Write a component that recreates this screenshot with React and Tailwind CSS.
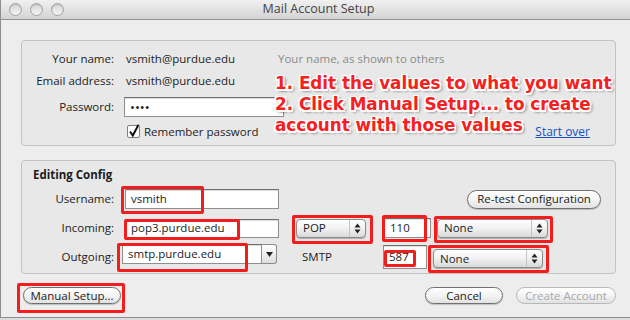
import React from 'react';

const ui = "font-['Open_Sans',sans-serif] text-[11.5px] text-[#1c1c1c]";

// Red highlight box drawn over a control
const Mark = ({ className }) => (
    <div className={`pointer-events-none absolute rounded-[2px] border-[3px] border-[#f31d1d] ${className}`} />
);

const Field = ({ value, className, children }) => (
    <div className={`relative flex items-center border border-[#8f8f8f] border-t-[#6f6f6f] bg-white pl-[5px] shadow-[inset_0_1px_1px_rgba(0,0,0,0.15)] ${className}`}>
        <span className="leading-none">{value}</span>
        {children}
    </div>
);

const Arrows = () => (
    <svg width="7" height="11" viewBox="0 0 7 11">
        <path d="M3.5 0.5 L6.5 4.5 L0.5 4.5 Z M3.5 10.5 L6.5 6.5 L0.5 6.5 Z" fill="#222" />
    </svg>
);

const Popup = ({ label, className, children }) => (
    <div className={`relative flex items-center rounded-[4px] border border-[#8a8a8a] bg-gradient-to-b from-white via-[#f1f1f1] to-[#d9d9d9] shadow-[0_1px_1px_rgba(0,0,0,0.25)] ${className}`}>
        <span className="flex-1 pl-[6px] leading-none">{label}</span>
        <div className="flex h-full w-[16px] items-center justify-center border-l border-[#c4c4c4]">
            <Arrows />
        </div>
        {children}
    </div>
);

const Button = ({ label, disabled, className, children }) => (
    <div className={`relative flex items-center justify-center rounded-full border bg-gradient-to-b from-white via-[#f4f4f4] to-[#e2e2e2] ${disabled ? 'border-[#b8b8b8] text-[#a9a9a9]' : 'border-[#707070] shadow-[0_1px_1px_rgba(0,0,0,0.2)]'} ${className}`}>
        <span className="leading-none">{label}</span>
        {children}
    </div>
);

const Light = () => (
    <div className="h-[13px] w-[13px] rounded-full border border-[#a4a4a4] bg-gradient-to-b from-[#d6d6d6] to-[#f4f4f4] shadow-[inset_0_1px_1px_rgba(0,0,0,0.15)]" />
);

export default function App() {
    return (
        <div className={`h-[320px] w-[630px] overflow-hidden bg-[#dcdcdc] ${ui}`}>
            <div className="flex h-[318px] flex-col border-b border-l border-[#8d8d8d] bg-[#ededed]">
                {/* title bar */}
                <div className="grid h-[20px] grid-cols-[1fr_auto_1fr] items-center border-b border-[#949494] bg-gradient-to-b from-[#f0f0f0] to-[#d4d4d4]">
                    <div className="flex gap-[8px] pl-[8px]">
                        <Light />
                        <Light />
                        <Light />
                    </div>
                    <div className="pl-[6px] text-[12.5px] text-[#444]">Mail Account Setup</div>
                    <div />
                </div>

                <div className="flex flex-col pl-[20px] pr-[14px]">
                    {/* account box */}
                    <div className="relative mt-[20px] flex h-[106px] flex-col rounded-[4px] border border-[#c3c3c3] bg-[#e8e8e8] pt-[9px]">
                        <div className="flex h-[18px] items-center">
                            <div className="w-[92px] text-right">Your name:</div>
                            <div className="ml-[12px] w-[152px]">vsmith@purdue.edu</div>
                            <div className="text-[#8a8a8a]">Your name, as shown to others</div>
                        </div>
                        <div className="mt-[4px] flex h-[18px] items-center">
                            <div className="w-[92px] text-right">Email address:</div>
                            <div className="ml-[12px]">vsmith@purdue.edu</div>
                        </div>
                        <div className="mt-[7px] flex h-[20px] items-center">
                            <div className="w-[92px] text-right">Password:</div>
                            <Field value="••••" className="ml-[10px] h-[20px] w-[160px] text-[13px]" />
                        </div>
                        <div className="mt-[6px] flex h-[17px] items-center">
                            <div className="ml-[105px] flex items-center gap-[3px]">
                                <svg width="14" height="15" viewBox="0 0 14 15">
                                    <rect x="0.5" y="1.5" width="12" height="12" rx="1.5" fill="#fff" stroke="#7f7f7f" />
                                    <path d="M3 7.5 L5.8 11.5 L11.5 0.8" fill="none" stroke="#111" strokeWidth="2" />
                                </svg>
                                <span>Remember password</span>
                            </div>
                            <div className="ml-auto mr-[25px] text-[12px] text-[#1450c8] underline">Start over</div>
                        </div>

                        {/* annotation */}
                        <div className="pointer-events-none absolute left-[253px] top-[32px] whitespace-nowrap font-['DejaVu_Sans',sans-serif] text-[16.8px] font-bold leading-[21px] text-[#f52020] [text-shadow:1.5px_1.5px_0_#fff,-1.5px_-1.5px_0_#fff,1.5px_-1.5px_0_#fff,-1.5px_1.5px_0_#fff,0_1.5px_0_#fff,0_-1.5px_0_#fff,1.5px_0_0_#fff,-1.5px_0_0_#fff,2px_2px_3px_rgba(0,0,0,0.7)]">
                            <div>1. Edit the values to what you want</div>
                            <div>2. Click Manual Setup... to create</div>
                            <div>account with those values</div>
                        </div>
                    </div>

                    {/* config box */}
                    <div className="mt-[14px] flex h-[114px] flex-col rounded-[4px] border border-[#c3c3c3] bg-[#e8e8e8]">
                        <div className="mt-[6px] ml-[11px] h-[15px] font-bold leading-[15px]">Editing Config</div>

                        <div className="mt-[7px] flex h-[20px] items-center">
                            <div className="w-[92px] text-right">Username:</div>
                            <Field value="vsmith" className="ml-[11px] h-[20px] w-[154px]">
                                <Mark className="-left-[5px] -top-[4px] h-[28px] w-[83px]" />
                            </Field>
                            <Button label="Re-test Configuration" className="ml-auto mr-[14px] h-[19px] w-[134px]" />
                        </div>

                        <div className="mt-[9px] flex h-[20px] items-center">
                            <div className="w-[92px] text-right">Incoming:</div>
                            <Field value="pop3.purdue.edu" className="ml-[11px] h-[19px] w-[154px]">
                                <Mark className="-left-[2px] -top-[1px] h-[21px] w-[116px]" />
                            </Field>
                            <Popup label="POP" className="ml-[17px] h-[19px] w-[70px]">
                                <Mark className="-left-[5px] -top-[5px] h-[29px] w-[81px]" />
                            </Popup>
                            <Field value="110" className="ml-[18px] h-[20px] w-[47px]">
                                <Mark className="-left-[3px] -top-[4px] h-[27px] w-[45px]" />
                            </Field>
                            <Popup label="None" className="ml-[6px] h-[19px] w-[111px]">
                                <Mark className="-left-[4px] -top-[4px] h-[27px] w-[119px]" />
                            </Popup>
                        </div>

                        <div className="mt-[6px] flex h-[24px] items-start">
                            <div className="mt-[4px] w-[92px] text-right">Outgoing:</div>
                            <div className="relative ml-[8px] flex h-[20px] w-[155px]">
                                <Field value="smtp.purdue.edu" className="h-[20px] flex-1" />
                                <div className="flex w-[15px] items-center justify-center rounded-r-[3px] border border-l-0 border-[#8a8a8a] bg-gradient-to-b from-white to-[#dedede]">
                                    <svg width="7" height="5" viewBox="0 0 7 5">
                                        <path d="M0 0 L7 0 L3.5 5 Z" fill="#222" />
                                    </svg>
                                </div>
                                <Mark className="-left-[5px] -top-[1px] h-[29px] w-[131px]" />
                            </div>
                            <div className="mt-[4px] ml-[25px] w-[81px]">SMTP</div>
                            <Field value="587" className="mt-[1px] h-[24px] w-[44px]">
                                <Mark className="left-[0px] top-[4px] h-[17px] w-[32px]" />
                            </Field>
                            <Popup label="None" className="mt-[5px] ml-[6px] h-[19px] w-[110px]">
                                <Mark className="-left-[6px] -top-[5px] h-[28px] w-[121px]" />
                            </Popup>
                        </div>
                    </div>
                </div>

                {/* bottom buttons */}
                <div className="mt-[13px] flex items-center pl-[22px] pr-[14px]">
                    <Button label="Manual Setup..." className="h-[17px] w-[98px]">
                        <Mark className="-left-[7px] -top-[5px] h-[30px] w-[108px]" />
                    </Button>
                    <Button label="Cancel" className="ml-auto h-[17px] w-[78px]" />
                    <Button label="Create Account" disabled className="ml-[13px] h-[17px] w-[100px]" />
                </div>
            </div>
        </div>
    );
}
